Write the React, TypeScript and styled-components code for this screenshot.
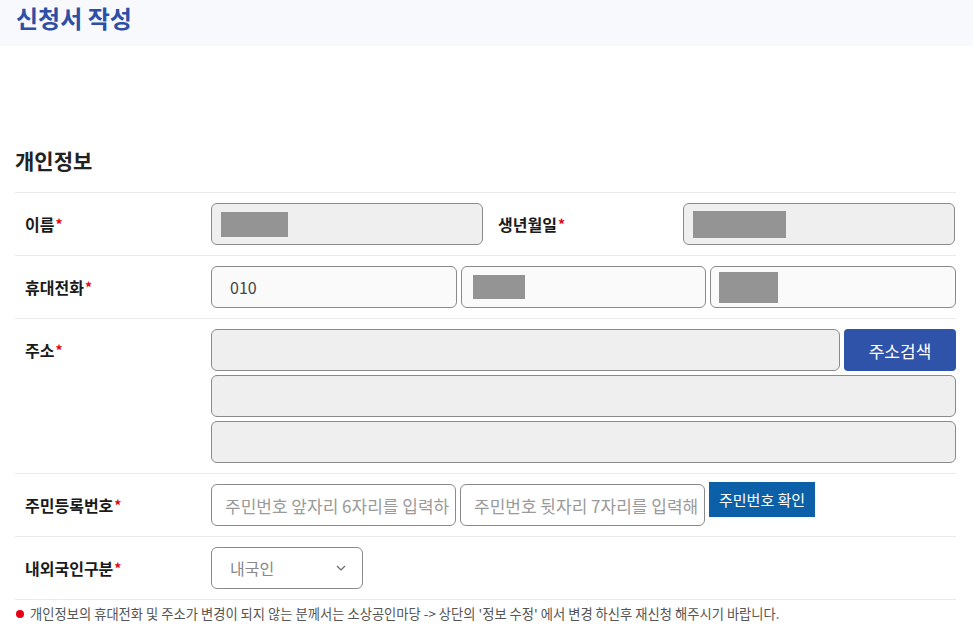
import styled, { createGlobalStyle } from 'styled-components';

const GlobalStyle = createGlobalStyle`
   * {
      box-sizing: border-box;
   }
   body {
      margin: 0;
      background: #ffffff;
      font-family: 'Noto Sans CJK KR', 'Noto Sans', sans-serif;
      color: #222;
   }
`;

const Page = styled.div`
   width: 973px;
   display: flex;
   flex-direction: column;
`;

const Header = styled.div`
   height: 46px;
   background-color: #f7f9fc;
   padding: 1px 0 0 16px;
`;

const PageTitle = styled.h1`
   margin: 0;
   font-size: 24px;
   line-height: 34px;
   font-weight: 700;
   color: #2d4fa5;
`;

const Section = styled.div`
   padding: 0 17px 0 15px;
   margin-top: 99px;
`;

const SectionTitle = styled.h2`
   margin: 0 0 16px 0;
   font-size: 21px;
   line-height: 31px;
   font-weight: 700;
   color: #222;
`;

const Table = styled.div`
   display: flex;
   flex-direction: column;
   border-bottom: 1px solid #ebebeb;
`;

const Row = styled.div<{ $cols?: string }>`
   display: grid;
   grid-template-columns: ${({ $cols }) => $cols ?? '196px 1fr'};
   padding: 10px 0;
   border-top: 1px solid #ebebeb;
`;

const Label = styled.div<{ $indent?: number }>`
   display: flex;
   align-items: center;
   height: 42px;
   padding-left: ${({ $indent }) => $indent ?? 10}px;
   font-size: 16px;
   font-weight: 700;
   color: #1a1a1a;
`;

const Star = styled.span`
   color: #e60012;
   margin-left: 1px;
   font-size: 14px;
`;

const Cell = styled.div<{ $cols?: string }>`
   display: grid;
   grid-template-columns: ${({ $cols }) => $cols ?? '1fr'};
   gap: 4px;
   align-items: start;
`;

const Field = styled.div<{ $disabled?: boolean; $pad?: number }>`
   height: 42px;
   border: 1px solid #8a8a8a;
   border-radius: 6px;
   background-color: ${({ $disabled }) => ($disabled ? '#efefef' : '#fafafa')};
   display: flex;
   align-items: center;
   padding-left: ${({ $pad }) => $pad ?? 9}px;
   font-size: 16px;
   color: #444;
   white-space: nowrap;
   overflow: hidden;
`;

const TextInput = styled.input`
   width: 100%;
   height: 42px;
   border: 1px solid #8a8a8a;
   border-radius: 6px;
   background-color: #fff;
   padding: 0 6px 0 13px;
   font-family: inherit;
   font-size: 17px;
   color: #444;
   outline: none;

   &::placeholder {
      color: #9a9a9a;
   }
`;

const Masked = styled.span<{ $w: number; $h?: number }>`
   display: inline-block;
   width: ${({ $w }) => $w}px;
   height: ${({ $h }) => $h ?? 25}px;
   background-color: #949494;
`;

const SearchButton = styled.button`
   height: 42px;
   border: none;
   border-radius: 4px;
   background-color: #2f53a9;
   color: #fff;
   font-family: inherit;
   font-size: 17px;
`;

const CheckButton = styled.button`
   height: 35px;
   margin-top: -2px;
   border: none;
   background-color: #0b60a8;
   color: #fff;
   font-family: inherit;
   font-size: 15px;
   padding: 0 10px;
   white-space: nowrap;
`;

const Select = styled.div`
   width: 152px;
   height: 42px;
   border: 1px solid #8a8a8a;
   border-radius: 6px;
   background-color: #fff;
   display: flex;
   align-items: center;
   justify-content: space-between;
   padding: 0 16px 0 18px;
   font-size: 16px;
   color: #888;
`;

const Notice = styled.p`
   margin: 4px 0 0 1px;
   display: flex;
   align-items: center;
   gap: 6px;
   font-size: 13.3px;
   line-height: 20px;
   color: #555;
   white-space: nowrap;
`;

const Dot = styled.span`
   flex: none;
   width: 8px;
   height: 8px;
   border-radius: 50%;
   background-color: #e60012;
`;

const Chevron = () => (
   <svg width='10' height='6' viewBox='0 0 10 6' fill='none'>
      <path d='M1 1l4 4 4-4' stroke='#666' strokeWidth='1.2' />
   </svg>
);

const App = () => {
   return (
      <Page>
         <GlobalStyle />
         <Header>
            <PageTitle>신청서 작성</PageTitle>
         </Header>
         <Section>
            <SectionTitle>개인정보</SectionTitle>
            <Table>
               <Row $cols='196px 272px 200px 272px'>
                  <Label>
                     이름<Star>*</Star>
                  </Label>
                  <Field $disabled>
                     <Masked $w={67} />
                  </Field>
                  <Label $indent={15}>
                     생년월일<Star>*</Star>
                  </Label>
                  <Field $disabled>
                     <Masked $w={93} $h={27} />
                  </Field>
               </Row>
               <Row>
                  <Label>
                     휴대전화<Star>*</Star>
                  </Label>
                  <Cell $cols='1fr 1fr 1fr'>
                     <Field $pad={18}>010</Field>
                     <Field $pad={11}>
                        <Masked $w={52} $h={24} />
                     </Field>
                     <Field $pad={8}>
                        <Masked $w={59} $h={31} />
                     </Field>
                  </Cell>
               </Row>
               <Row>
                  <Label>
                     주소<Star>*</Star>
                  </Label>
                  <Cell $cols='1fr 112px'>
                     <Field $disabled />
                     <SearchButton>주소검색</SearchButton>
                     <Field $disabled style={{ gridColumn: '1 / -1' }} />
                     <Field $disabled style={{ gridColumn: '1 / -1' }} />
                  </Cell>
               </Row>
               <Row>
                  <Label>
                     주민등록번호<Star>*</Star>
                  </Label>
                  <Cell $cols='245px 245px auto'>
                     <TextInput placeholder='주민번호 앞자리 6자리를 입력하세요' />
                     <TextInput placeholder='주민번호 뒷자리 7자리를 입력해주세요' />
                     <div>
                        <CheckButton>주민번호 확인</CheckButton>
                     </div>
                  </Cell>
               </Row>
               <Row>
                  <Label>
                     내외국인구분<Star>*</Star>
                  </Label>
                  <Cell>
                     <Select>
                        내국인
                        <Chevron />
                     </Select>
                  </Cell>
               </Row>
            </Table>
            <Notice>
               <Dot />
               개인정보의 휴대전화 및 주소가 변경이 되지 않는 분께서는 소상공인마당 -&gt; 상단의 '정보 수정' 에서 변경 하신후 재신청 해주시기 바랍니다.
            </Notice>
         </Section>
      </Page>
   );
};

export default App;
